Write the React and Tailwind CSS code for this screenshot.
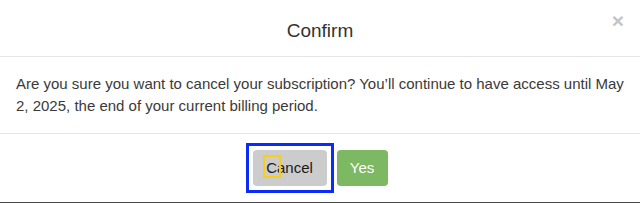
import React from 'react'

export default function App() {
    return (
        <div className="w-[640px] h-[203px] bg-white text-[#333] border-b border-[#4a4a4a] overflow-hidden" style={{ fontFamily: '"Liberation Sans", Arial, sans-serif' }}>
            {/* Header */}
            <div className="relative h-[57px] px-[15px] pt-[18px] border-b border-[#e5e5e5]">
                <h4 className="text-center text-[19px] leading-[26px] text-[#333]">Confirm</h4>
                <button className="absolute right-[16px] top-[10px] text-[21px] font-bold leading-none text-[#c4c4c4]">×</button>
            </div>

            {/* Body */}
            <div className="px-[16px] pt-[16px] pb-[16px] text-[15px] leading-[22px] text-[#3a3a3a]">
                <p>Are you sure you want to cancel your subscription? You’ll continue to have access until May 2, 2025, the end of your current billing period.</p>
            </div>

            {/* Footer */}
            <div className="flex justify-center gap-[10px] px-[15px] pt-[16px] border-t border-[#e5e5e5]">
                <button className="relative w-[74px] h-[36px] rounded-[4px] bg-[#cccccc] text-[15px] text-[#1a1a1a]">
                    Cancel
                    {/* focus ring + highlight overlays */}
                    <span className="absolute block -left-[7px] -right-[7px] -top-[7px] -bottom-[7px] border-[3px] border-[#0a2cf5]" />
                    <span className="absolute block left-[10px] top-[5px] w-[18px] h-[23px] border-2 border-[#f5cf1a]" />
                </button>
                <button className="w-[51px] h-[36px] rounded-[4px] bg-[#7db862] text-[15px] text-white">Yes</button>
            </div>
        </div>
    )
}
